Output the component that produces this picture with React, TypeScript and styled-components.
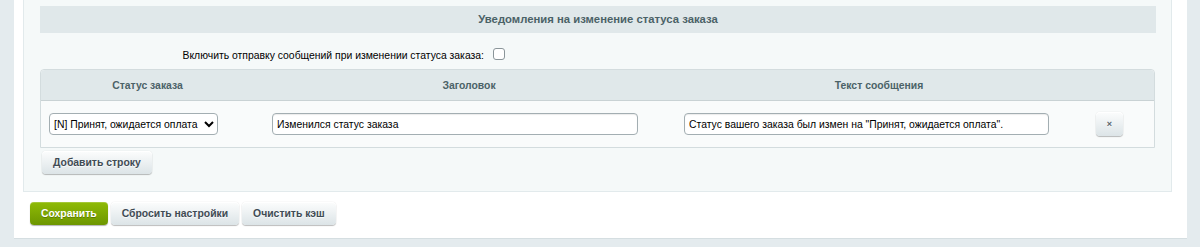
import React from "react";
import styled, { createGlobalStyle } from "styled-components";

const GlobalStyle = createGlobalStyle`
  body {
    margin: 0;
    padding: 0;
    background: #e4ebee;
    font-family: "Liberation Sans", Arial, sans-serif;
    font-size: 10.4px;
    color: #000;
  }
`;

const Panel = styled.div`
  margin: 0 13px 0 14px;
  background: #fff;
  border-bottom: 1px solid #d5dee1;
  padding: 0 15px 13px 9px;
`;

const Section = styled.div`
  background: #f5f9f9;
  border: 1px solid #e2eaec;
  border-top: none;
  padding: 6px 15px 17px 16px;
`;

const SectionTitle = styled.div`
  height: 27px;
  line-height: 27px;
  background: #e0e8ea;
  text-align: center;
  font-size: 11.3px;
  font-weight: bold;
  color: #4b6267;
`;

const OptionRow = styled.div`
  display: grid;
  grid-template-columns: 452px 1fr;
  align-items: center;
  padding: 12px 0 2px;
  line-height: 20px;
`;

const OptionLabel = styled.label`
  text-align: right;
  padding-right: 8px;
`;

const Checkbox = styled.span`
  display: inline-block;
  width: 10px;
  height: 10px;
  border: 1px solid #8a9599;
  border-radius: 3px;
  background: #fff;
  margin-left: 1px;
  margin-top: 3px;
`;

const Table = styled.div`
  width: 1115px;
  border: 1px solid #d3dcde;
  border-radius: 4px 4px 0 0;
  box-sizing: border-box;
  background: #f9fbfb;
`;

const Row = styled.div<{ $head?: boolean }>`
  display: grid;
  grid-template-columns: 213px 430px 390px 80px;
  align-items: center;
  height: ${(p) => (p.$head ? "30px" : "46px")};
  background: ${(p) => (p.$head ? "#e0e8ea" : "transparent")};
  border-bottom: ${(p) => (p.$head ? "1px solid #c9d2d4" : "none")};
  border-radius: ${(p) => (p.$head ? "4px 4px 0 0" : "0")};
`;

const HeadCell = styled.div`
  text-align: center;
  font-weight: bold;
  color: #4b6267;
`;

const Cell = styled.div<{ $indent: number }>`
  display: flex;
  justify-content: flex-start;
  padding-left: ${(p) => p.$indent}px;
`;

const Select = styled.select`
  width: 169px;
  height: 22px;
  flex-shrink: 0;
  font-family: "Liberation Sans", Arial, sans-serif;
  font-size: 10.4px;
  color: #000;
  border: 1px solid #a3aeb2;
  border-radius: 4px;
  background: #fff;
  padding: 0;
`;

const TextInput = styled.input<{ $w: number }>`
  width: ${(p) => p.$w}px;
  height: 22px;
  flex-shrink: 0;
  box-sizing: border-box;
  font-family: "Liberation Sans", Arial, sans-serif;
  font-size: 10.4px;
  color: #000;
  border: 1px solid #a3aeb2;
  border-radius: 4px;
  box-shadow: inset 0 1px 1px rgba(0, 0, 0, 0.08);
  padding: 0 4px;
  background: #fff;
`;

const Button = styled.button<{ $save?: boolean }>`
  height: 23px;
  padding: 0 11px;
  border: none;
  border-radius: 4px;
  font-family: "Liberation Sans", Arial, sans-serif;
  font-size: 10.4px;
  font-weight: bold;
  cursor: pointer;
  color: ${(p) => (p.$save ? "#fff" : "#3f4b54")};
  text-shadow: ${(p) => (p.$save ? "0 1px rgba(0,0,0,0.25)" : "0 1px rgba(255,255,255,0.7)")};
  background: ${(p) =>
    p.$save
      ? "linear-gradient(to bottom, #8fbb06, #6d9600)"
      : "linear-gradient(to bottom, #fcfdfd, #dce4e7)"};
  box-shadow: ${(p) =>
    p.$save
      ? "0 1px 1px rgba(0,0,0,0.3), inset 0 1px rgba(255,255,255,0.2)"
      : "0 0 1px rgba(0,0,0,0.2), 0 1px 1px rgba(0,0,0,0.25), inset 0 1px #fff"};
`;

const DeleteButton = styled(Button)`
  width: 27px;
  height: 24px;
  padding: 0;
  font-size: 9px;
  color: #58656b;
`;

const AddRow = styled.div`
  padding: 3px 0 0 2px;
`;

const Footer = styled.div`
  display: flex;
  gap: 3px;
  padding: 10px 0 0 7px;
`;

export default function App() {
  return (
    <>
      <GlobalStyle />
      <Panel>
        <Section>
          <SectionTitle>Уведомления на изменение статуса заказа</SectionTitle>
          <OptionRow>
            <OptionLabel>Включить отправку сообщений при изменении статуса заказа:</OptionLabel>
            <div>
              <Checkbox />
            </div>
          </OptionRow>
          <Table>
            <Row $head>
              <HeadCell>Статус заказа</HeadCell>
              <HeadCell>Заголовок</HeadCell>
              <HeadCell>Текст сообщения</HeadCell>
              <HeadCell />
            </Row>
            <Row>
              <Cell $indent={8}>
                <Select defaultValue="N">
                  <option value="N">[N] Принят, ожидается оплата</option>
                </Select>
              </Cell>
              <Cell $indent={18}>
                <TextInput $w={366} defaultValue="Изменился статус заказа" />
              </Cell>
              <Cell $indent={0}>
                <TextInput
                  $w={365}
                  defaultValue={'Статус вашего заказа был измен на "Принят, ожидается оплата".'}
                />
              </Cell>
              <Cell $indent={22}>
                <DeleteButton>×</DeleteButton>
              </Cell>
            </Row>
          </Table>
          <AddRow>
            <Button>Добавить строку</Button>
          </AddRow>
        </Section>
        <Footer>
          <Button $save>Сохранить</Button>
          <Button>Сбросить настройки</Button>
          <Button>Очистить кэш</Button>
        </Footer>
      </Panel>
    </>
  );
}
